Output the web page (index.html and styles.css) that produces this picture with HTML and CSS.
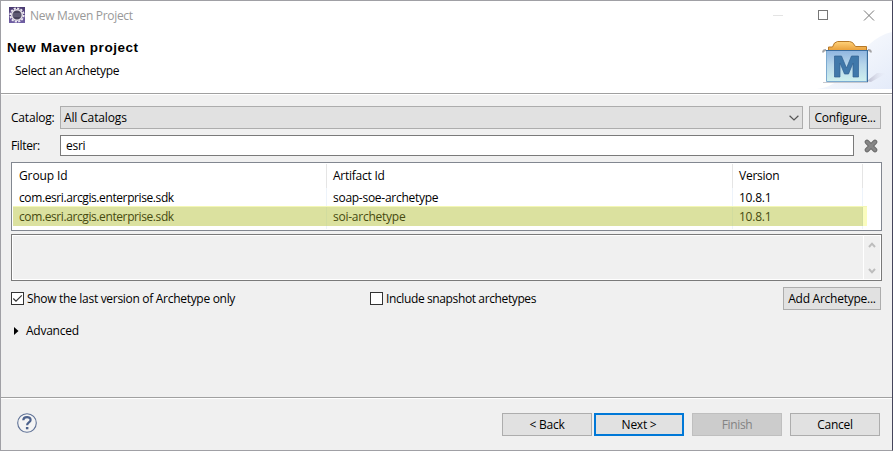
FILE: index.html
```
<!DOCTYPE html>
<html lang="en">
<head>
<meta charset="utf-8">
<title>New Maven Project</title>
<link rel="stylesheet" href="styles.css">
</head>
<body>
<div class="dialog">
  <header class="header">
    <div class="heading">
      <div class="titlebar">
        <svg class="app-icon" width="16" height="16" viewBox="0 0 16 16">
          <defs><linearGradient id="eclipse" x2="0" y2="1"><stop stop-color="#4a3a70"/><stop offset="1" stop-color="#7160a5"/></linearGradient></defs>
          <rect width="16" height="16" fill="url(#eclipse)"/>
          <circle cx="8" cy="8" r="6.700" fill="none" stroke="#eeeaf2" stroke-width="1.800" stroke-dasharray="2.200 1.300"/>
          <circle cx="8" cy="8" r="5.300" fill="#474359" stroke="#e5e1e9" stroke-width="1.500"/>
          <path d="M4 7h8M4 9h8" stroke="#77728d"/>
        </svg>
        <span class="t-window">New Maven Project</span>
      </div>
      <h1>New Maven project</h1>
      <p class="t-sub">Select an Archetype</p>
    </div>
    <div class="header-right">
      <svg class="window-controls" width="120" height="30" viewBox="0 0 120 30" fill="none">
        <path d="M1 14.500h10" stroke="#e4e4e4"/>
        <rect x="46.500" y="9.500" width="9" height="9" stroke="#777"/>
        <path d="M92 9.500l10 10M102 9.500l-10 10" stroke="#777"/>
      </svg>
      <svg class="banner" width="75" height="62" viewBox="0 0 75 62">
        <defs>
          <linearGradient id="sky" x2="1" y2="1"><stop stop-color="#fff"/><stop offset="1" stop-color="#e4ebf9"/></linearGradient>
          <linearGradient id="box" x2="0" y2="1"><stop stop-color="#8fb5e0"/><stop offset=".45" stop-color="#b6d5ea"/><stop offset="1" stop-color="#cff0ee"/></linearGradient>
          <linearGradient id="tab" x2="0" y2="1"><stop stop-color="#ffd27a"/><stop offset="1" stop-color="#e79c36"/></linearGradient>
          <linearGradient id="shade"><stop stop-color="#b8b8cb"/><stop offset="1" stop-color="#e9edf8" stop-opacity="0"/></linearGradient>
        </defs>
        <path d="M0 58C34 56 40 8 75 1v57z" fill="url(#sky)"/>
        <path d="M50 50l10-8h10l-16 9z" fill="url(#shade)"/>
        <path d="M6 51.500h45" stroke="#c7c9cf"/>
        <path d="M11.500 20v-4h4l2-4 3-1.500h12l3 1 3 4H49.500V20z" fill="url(#tab)" stroke="#b77928"/>
        <path d="M6 21.500q0-2.500 3-2.500M51 19q3 0 3 2.500" fill="none" stroke="#a4a4a6" stroke-width="1.800"/>
        <path d="M9.500 19.500H50v31H9.500z" fill="url(#box)" stroke="#7baad0"/>
        <path d="M9 19.500h42M50.500 19v32" stroke="#3b6d9e"/>
        <path d="M17.500 46V25h7l5 12 5-12h7v21h-5.500V32l-4.500 11h-4l-4.500-11v14z" fill="#4078aa" stroke="#315f91" stroke-width=".7"/>
      </svg>
    </div>
  </header>

  <main class="content">
    <div class="row catalog">
      <label class="t-catalog">Catalog:</label>
      <div class="select"><span class="t-all">All Catalogs</span>
        <svg width="10" height="6" viewBox="0 0 10 6"><path d="M.6 .7L5 5 9.400 .7" fill="none" stroke="#555" stroke-width="1.200"/></svg>
      </div>
      <button class="btn configure"><span>Configure...</span></button>
    </div>
    <div class="row filter">
      <label class="t-filter">Filter:</label>
      <div class="input"><span class="t-esri">esri</span></div>
      <svg class="clear" width="14" height="14" viewBox="0 0 14 14"><path d="M3 3l8 8M11 3l-8 8" stroke="#686868" stroke-width="4.600" stroke-linecap="round"/><path d="M3 3l8 8M11 3l-8 8" stroke="#868686" stroke-width="3" stroke-linecap="round"/></svg>
    </div>

    <div class="table">
      <div class="tr th"><div><span class="t-gid">Group Id</span></div><div><span>Artifact Id</span></div><div><span class="t-ver">Version</span></div></div>
      <div class="tr first-row"><div><span class="t-com">com.esri.arcgis.enterprise.sdk</span></div><div><span class="t-soap">soap-soe-archetype</span></div><div><span>10.8.1</span></div></div>
      <div class="tr selected"><div><span class="t-com">com.esri.arcgis.enterprise.sdk</span></div><div><span>soi-archetype</span></div><div><span>10.8.1</span></div></div>
      <div class="tr rest"><div></div><div></div><div></div></div>
    </div>

    <div class="description">
      <div class="scroll">
        <svg width="8" height="6" viewBox="0 0 8 6"><path d="M1 5l3-3.300L7 5" fill="none" stroke="#bdbdbd" stroke-width="2"/></svg>
        <svg width="8" height="6" viewBox="0 0 8 6"><path d="M1 1l3 3.300L7 1" fill="none" stroke="#bdbdbd" stroke-width="2"/></svg>
      </div>
    </div>

    <div class="options">
      <div class="check first"><span class="box"><svg width="11" height="11" viewBox="0 0 11 11"><path d="M1.300 5.500L4 8.200 9.800 2.300" fill="none" stroke="#333" stroke-width="1.200"/></svg></span><span class="t-show">Show the last version of Archetype only</span></div>
      <div class="check"><span class="box"></span><span class="t-inc">Include snapshot archetypes</span></div>
      <button class="btn add"><span>Add Archetype...</span></button>
    </div>
    <div class="advanced"><svg width="5" height="8" viewBox="0 0 5 8"><path d="M0 0l4.500 4L0 8z"/></svg><span>Advanced</span></div>
  </main>

  <footer class="footer">
    <svg class="help" width="20" height="20" viewBox="0 0 20 20" fill="none"><circle cx="10" cy="10" r="9.300" fill="#f4f4f4" stroke="#5e7196" stroke-width="1.100"/><path d="M6.300 7.200C6.400 3.100 13.600 3.100 13.600 6.900c0 2.600-3.500 2.500-3.500 5.300" stroke="#4d628c" stroke-width="2.200"/><path d="M8.900 14h2.500v2.300H8.900z" fill="#4d628c"/></svg>
    <div class="actions">
      <button class="btn"><span>&lt; Back</span></button>
      <button class="btn default"><span>Next &gt;</span></button>
      <button class="btn disabled" disabled><span class="t-fin">Finish</span></button>
      <button class="btn"><span>Cancel</span></button>
    </div>
  </footer>
</div>
</body>
</html>
```
FILE: styles.css
```
* { box-sizing: border-box; }
body { margin: 0; font: 12px/16px "Open Sans", "Noto Sans", sans-serif; color: #000; letter-spacing: -0.25px; }
svg { display: block; flex: none; }
span, label { white-space: nowrap; }
.dialog { width: 893px; height: 451px; display: flex; flex-direction: column; background: #f0f0f0; border: 1px solid #a0a0a5; border-right-color: #44445a; overflow: hidden; }
.header { height: 93px; flex: none; display: flex; justify-content: space-between; background: #fff; border-bottom: 1px solid #a0a0a0; }
.titlebar { display: flex; align-items: center; gap: 5px; height: 30px; padding-left: 8px; color: #999; }
.app-icon { margin-top: -2px; }
h1 { margin: 9px 0 0 6px; font: bold 13.5px/16px "Liberation Sans", sans-serif; letter-spacing: 0.55px; white-space: nowrap; }
.t-window { letter-spacing: -0.31px; }
.t-sub { margin: 7px 0 0 14px; letter-spacing: -0.31px; }
.t-catalog { letter-spacing: -0.19px; }
.t-all { letter-spacing: -0.14px; }
.t-filter { letter-spacing: -0.35px; }
.t-gid { letter-spacing: -0.1px; }
.t-com { letter-spacing: -0.4px; }
.t-soap { letter-spacing: -0.27px; }
.t-show { letter-spacing: -0.3px; }
.t-inc { letter-spacing: -0.38px; }
.header-right { width: 120px; display: flex; flex-direction: column; align-items: flex-end; }
.content { flex: 1; padding: 12px 10px 0; border-top: 1px solid #fff; }
.row { display: flex; align-items: center; }
.row label { width: 49px; flex: none; }
.catalog { height: 23px; margin-top: -1px; }
.select { width: 743px; height: 23px; display: flex; align-items: center; justify-content: space-between; padding: 0 3px; background: #e1e1e1; border: 1px solid #adadad; }
.btn { width: 90px; height: 23px; padding: 0; display: flex; align-items: center; justify-content: center; font: inherit; letter-spacing: inherit; color: #000; background: #e1e1e1; border: 1px solid #adadad; border-radius: 0; flex: none; }
.configure { width: 72px; margin-left: 6px; }
.filter { margin-top: 6px; height: 21px; }
.input { width: 794px; height: 21px; padding: 2px 5px; background: #fff; border: 1px solid #7a7a7a; }
.clear { margin-left: 10px; }
.table { width: 871px; height: 69px; margin-top: 6px; padding: 1px; background: #fff; border: 1px solid #828790; }
.tr { display: flex; height: 18px; }
.tr > div { border-right: 1px solid #edf3fa; padding-left: 6px; display: flex; align-items: center; }
.tr > div:nth-child(1) { width: 314px; }
.tr > div:nth-child(2) { width: 406px; }
.tr > div:nth-child(3) { width: 130px; }
.th { height: 24px; }
.th > div { border-color: #e5e5e5; }
.first-row span { margin-top: 2px; }
.selected { width: 854px; height: 20px; background: #fafcbe; border-top: 1px solid #f3f7b5; color: #474b10; }
.selected > div { background: #dbe19f; border-color: #d1dc9f; }
.rest { height: 3px; }
.description { width: 871px; height: 47px; margin-top: 3px; border: 1px solid #7a7a7a; box-shadow: inset 0 0 0 1px #fff; padding: 1px; display: flex; justify-content: flex-end; }
.scroll { width: 17px; border-left: 1px solid #fff; display: flex; flex-direction: column; justify-content: space-between; align-items: center; padding: 6px 0 5px; }
.options { width: 870px; display: flex; height: 23px; margin-top: 6px; align-items: center; }
.check { display: flex; align-items: center; gap: 3px; flex: 1; }
.check.first { flex: none; width: 359px; }
.box { width: 13px; height: 13px; border: 1px solid #333; background: #fff; flex: none; }
.add { width: 98px; }
.advanced { display: flex; align-items: center; gap: 7px; margin: 13px 0 0 3px; }
.footer { height: 53px; flex: none; display: flex; justify-content: space-between; align-items: flex-start; padding: 15px 12px 0 16px; border-top: 1px solid #a0a0a0; box-shadow: inset 0 1px #fff; }
.actions { display: flex; gap: 8px; margin-top: 0; }
.default { border: 2px solid #0078d7; margin-left: -6px; }
.disabled { background: #ccc; border-color: #bfbfbf; color: #838383; }
.t-fin { letter-spacing: -0.35px; }
```
